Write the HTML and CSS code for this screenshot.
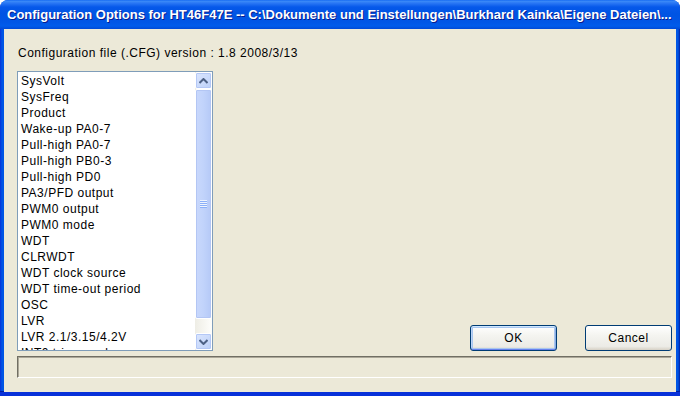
FILE: index.html
```html
<!DOCTYPE html>
<html lang="de">
<head>
    <meta charset="UTF-8">
    <link rel="stylesheet" href="styles.css">
</head>
<body>
    <div class="window">
        <div class="titlebar">
            <span class="title">Configuration Options for HT46F47E -- C:\Dokumente und Einstellungen\Burkhard Kainka\Eigene Dateien\...</span>
        </div>

        <div class="client">
            <div class="version">Configuration file (.CFG) version : 1.8 2008/3/13</div>

            <div class="main-row">
                <div class="listbox">
                    <div class="items">
                        <div class="item">SysVolt</div>
                        <div class="item">SysFreq</div>
                        <div class="item">Product</div>
                        <div class="item">Wake-up PA0-7</div>
                        <div class="item">Pull-high PA0-7</div>
                        <div class="item">Pull-high PB0-3</div>
                        <div class="item">Pull-high PD0</div>
                        <div class="item">PA3/PFD output</div>
                        <div class="item">PWM0 output</div>
                        <div class="item">PWM0 mode</div>
                        <div class="item">WDT</div>
                        <div class="item">CLRWDT</div>
                        <div class="item">WDT clock source</div>
                        <div class="item">WDT time-out period</div>
                        <div class="item">OSC</div>
                        <div class="item">LVR</div>
                        <div class="item">LVR 2.1/3.15/4.2V</div>
                        <div class="item">INT0 trigger edge</div>
                    </div>
                    <div class="scrollbar">
                        <div class="sb-btn">
                            <svg width="9" height="6" viewBox="0 0 9 6"><path d="M0.5 5 L4.5 1 L8.5 5" fill="none" stroke="#4d6185" stroke-width="2"/></svg>
                        </div>
                        <div class="sb-track">
                            <div class="sb-thumb">
                                <div class="grip"></div>
                            </div>
                        </div>
                        <div class="sb-btn">
                            <svg width="9" height="6" viewBox="0 0 9 6"><path d="M0.5 1 L4.5 5 L8.5 1" fill="none" stroke="#4d6185" stroke-width="2"/></svg>
                        </div>
                    </div>
                </div>

                <div class="buttons">
                    <button class="btn default">OK</button>
                    <button class="btn">Cancel</button>
                </div>
            </div>

            <div class="statusbar"></div>
        </div>
    </div>
</body>
</html>
```

FILE: styles.css
```css
* {
    margin: 0;
    padding: 0;
    box-sizing: border-box;
}

body {
    width: 680px;
    height: 396px;
    background: #ffffff;
    font-family: "Liberation Sans", Arial, sans-serif;
    overflow: hidden;
}

.window {
    width: 680px;
    height: 396px;
    display: flex;
    flex-direction: column;
    background: linear-gradient(90deg, #0831d9 0, #0055e5 2px, #0055e5 678px, #001ea0 680px);
    border-radius: 8px 8px 0 0;
    border-bottom: 4px solid #0831d9;
    box-shadow: inset 0 -1px 0 #001d9e;
}

.titlebar {
    height: 29px;
    flex: none;
    display: flex;
    align-items: center;
    padding-left: 7px;
    border-radius: 8px 8px 0 0;
    background: linear-gradient(#0a5ff0 0, #3d8cf8 1px, #2b78f5 3px, #0658ea 7px, #0054e3 14px, #0056e6 22px, #005ceb 26px, #0049d6 29px);
}

.title {
    color: #ffffff;
    font-weight: bold;
    font-size: 13px;
    white-space: nowrap;
    text-shadow: 1px 1px 0 #0a1c8c;
}

.client {
    flex: 1;
    margin: 0 4px;
    background: #ece9d8;
    display: flex;
    flex-direction: column;
    padding: 16px 4px 0 13px;
    font-size: 12px;
    letter-spacing: 0.5px;
    color: #000000;
}

.version {
    height: 16px;
    line-height: 16px;
    padding-left: 1px;
}

.main-row {
    margin-top: 10px;
    display: flex;
    align-items: flex-end;
    justify-content: space-between;
}

.listbox {
    width: 196px;
    height: 280px;
    border: 1px solid #7f9db9;
    background: #ffffff;
    display: flex;
}

.items {
    flex: 1;
    overflow: hidden;
    padding: 1px 0 0 3px;
}

.item {
    height: 16px;
    line-height: 16px;
    white-space: nowrap;
}

.scrollbar {
    width: 17px;
    display: flex;
    flex-direction: column;
    background: linear-gradient(90deg, #eeede5, #fefefb);
}

.sb-btn {
    height: 17px;
    flex: none;
    display: flex;
    align-items: center;
    justify-content: center;
    border: 1px solid #ffffff;
    border-radius: 2px;
    background: linear-gradient(135deg, #dbe6fe, #bcd0f8);
    box-shadow: inset 0 0 0 1px #b4c8f6;
}

.sb-track {
    flex: 1;
    padding-bottom: 14px;
    display: flex;
}

.sb-thumb {
    flex: 1;
    border: 1px solid #ffffff;
    border-radius: 2px;
    background: linear-gradient(90deg, #c9d8fc, #c1d3fb 50%, #b5c9f7);
    box-shadow: inset 0 0 0 1px #b3c6f4;
    display: flex;
    align-items: center;
    justify-content: center;
}

.grip {
    width: 7px;
    height: 8px;
    margin-left: -1px;
    background: repeating-linear-gradient(#eef4fe 0, #eef4fe 1px, #8cb0f8 1px, #8cb0f8 2px);
}

.buttons {
    display: flex;
    gap: 28px;
}

.btn {
    width: 87px;
    height: 26px;
    border: 1px solid #003c74;
    border-radius: 3px;
    background: linear-gradient(#ffffff 0, #f4f4f0 40%, #ecebe6 85%, #d6d0c5 100%);
    font-family: "Liberation Sans", Arial, sans-serif;
    font-size: 12px;
    letter-spacing: 0.5px;
    color: #000000;
}

.btn.default {
    box-shadow: inset 0 1px 0 #cee7ff, inset 0 -1px 0 #6982ee, inset 1px 0 0 #bcd4f6, inset -1px 0 0 #89ade4, inset 0 0 0 2px #a9c6ef;
}

.statusbar {
    margin-top: 5px;
    height: 22px;
    border-top: 1px solid #716f64;
    border-left: 1px solid #716f64;
    border-right: 1px solid #ffffff;
    border-bottom: 1px solid #ffffff;
    box-shadow: inset 1px 1px 0 #aca899;
}
```
